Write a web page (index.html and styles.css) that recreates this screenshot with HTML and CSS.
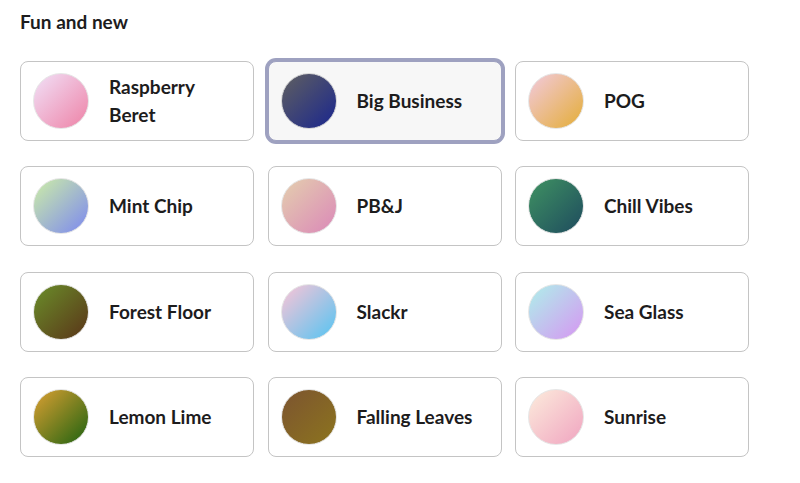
FILE: index.html
```html
<!DOCTYPE html>
<html lang="en">
<head>
<meta charset="utf-8">
<title>Themes</title>
<link rel="stylesheet" href="styles.css">
</head>
<body>
<section class="themes">
  <h2 class="themes-title">Fun and new</h2>
  <div class="theme-grid">
    <div class="theme-card"><span class="swatch sw-raspberry"></span><span class="theme-name">Raspberry Beret</span></div>
    <div class="theme-card is-selected"><span class="swatch sw-bigbiz"></span><span class="theme-name">Big Business</span></div>
    <div class="theme-card"><span class="swatch sw-pog"></span><span class="theme-name">POG</span></div>
    <div class="theme-card"><span class="swatch sw-mint"></span><span class="theme-name">Mint Chip</span></div>
    <div class="theme-card"><span class="swatch sw-pbj"></span><span class="theme-name">PB&amp;J</span></div>
    <div class="theme-card"><span class="swatch sw-chill"></span><span class="theme-name">Chill Vibes</span></div>
    <div class="theme-card"><span class="swatch sw-forest"></span><span class="theme-name">Forest Floor</span></div>
    <div class="theme-card"><span class="swatch sw-slackr"></span><span class="theme-name">Slackr</span></div>
    <div class="theme-card"><span class="swatch sw-seaglass"></span><span class="theme-name">Sea Glass</span></div>
    <div class="theme-card"><span class="swatch sw-lemon"></span><span class="theme-name">Lemon Lime</span></div>
    <div class="theme-card"><span class="swatch sw-leaves"></span><span class="theme-name">Falling Leaves</span></div>
    <div class="theme-card"><span class="swatch sw-sunrise"></span><span class="theme-name">Sunrise</span></div>
  </div>
</section>
</body>
</html>
```
FILE: styles.css
```css
* { box-sizing: border-box; }
html, body { margin: 0; background: #ffffff; }
body {
  font-family: Lato, "Open Sans", "Liberation Sans", sans-serif;
  color: #1d1c1d;
}
.themes { padding: 12px 20px 0 20px; }
.themes-title {
  margin: 0 0 29px 0;
  font-size: 19px;
  line-height: 20px;
  font-weight: 700;
}
.theme-grid {
  display: grid;
  grid-template-columns: repeat(3, 234px);
  grid-auto-rows: 80px;
  column-gap: 13.5px;
  row-gap: 25.3px;
}
.theme-card {
  display: flex;
  align-items: center;
  gap: 20px;
  padding: 0 12px;
  border: 1px solid #c4c4c4;
  border-radius: 8px;
  background: #ffffff;
}
.theme-card.is-selected {
  background: #f7f7f7;
  border-color: #9ea1c0;
  box-shadow: 0 0 0 3px #9ea1c0;
}
.swatch {
  flex: 0 0 56px;
  width: 56px;
  height: 56px;
  border-radius: 50%;
  border: 1px solid #e6e6e6;
}
.theme-name {
  font-size: 19px;
  line-height: 28px;
  font-weight: 700;
}
.sw-raspberry { background: linear-gradient(135deg, #f1e1f8 0%, #ee82a6 100%); }
.sw-bigbiz { background: linear-gradient(135deg, #606060 0%, #1a268e 100%); border-color: #d6d6d6; }
.sw-pog { background: linear-gradient(135deg, #f2cade 0%, #e4ad36 100%); }
.sw-mint { background: linear-gradient(135deg, #cdeea6 0%, #7c88f0 100%); }
.sw-pbj { background: linear-gradient(135deg, #e4cfae 0%, #db88b8 100%); }
.sw-chill { background: linear-gradient(135deg, #3f9262 0%, #1e4b5e 100%); }
.sw-forest { background: linear-gradient(135deg, #6a8e2a 0%, #5a3418 100%); }
.sw-slackr { background: linear-gradient(135deg, #fcc4d6 0%, #54c4f2 100%); }
.sw-seaglass { background: linear-gradient(135deg, #aef0ea 0%, #d696f2 100%); }
.sw-lemon { background: linear-gradient(135deg, #dca032 0%, #1e6210 100%); }
.sw-leaves { background: linear-gradient(135deg, #7c5430 0%, #8c741e 100%); }
.sw-sunrise { background: linear-gradient(135deg, #fcecdc 0%, #f0a4c0 100%); }
```
